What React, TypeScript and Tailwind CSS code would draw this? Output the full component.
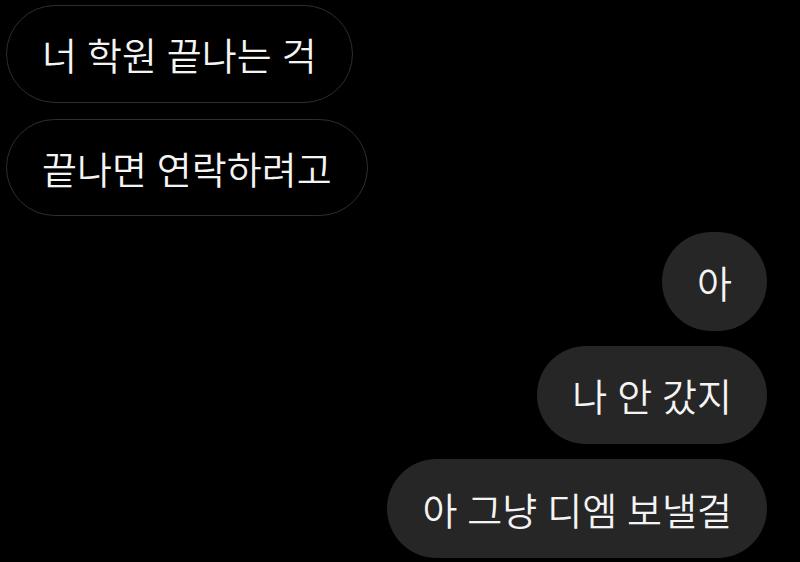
const font = {
  fontFamily: '"Noto Sans CJK KR", "Noto Sans", sans-serif',
};

type Msg = { text: string; mine: boolean; h: string; mt: string };

const messages: Msg[] = [
  { text: "너 학원 끝나는 걱", mine: false, h: "h-[98px]", mt: "mt-[5px]" },
  { text: "끝나면 연락하려고", mine: false, h: "h-[97px]", mt: "mt-[16px]" },
  { text: "아", mine: true, h: "h-[99px]", mt: "mt-[16px]" },
  { text: "나 안 갔지", mine: true, h: "h-[98px]", mt: "mt-[15px]" },
  { text: "아 그냥 디엠 보낼걸", mine: true, h: "h-[99px]", mt: "mt-[15px]" },
];

function Bubble({ m }: { m: Msg }) {
  const base =
    "flex items-center rounded-full px-[35px] text-[38px] font-[350] leading-none text-[#f4f4f4] whitespace-pre [word-spacing:1.5px]";
  const skin = m.mine
    ? "bg-[#262626]"
    : "border border-[#2e2e2e] bg-black";
  return (
    <div className={`flex ${m.mine ? "justify-end pr-[33px]" : "justify-start pl-[6px]"} ${m.mt}`}>
      <div className={`${base} ${skin} ${m.h}`} style={font}>
        {m.text}
      </div>
    </div>
  );
}

export default function App() {
  return (
    <div className="h-[562px] w-[800px] overflow-hidden bg-black">
      <div className="flex flex-col">
        {messages.map((m, i) => (
          <Bubble key={i} m={m} />
        ))}
      </div>
    </div>
  );
}
